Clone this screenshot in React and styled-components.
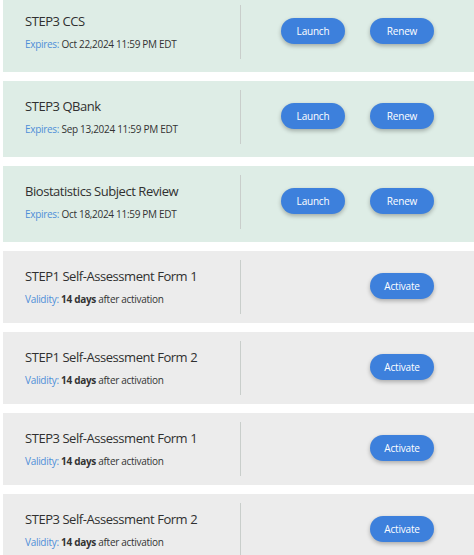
import React from 'react'
import styled, { createGlobalStyle } from 'styled-components'

const GlobalStyle = createGlobalStyle`
    body {
        margin: 0;
        background: #ffffff;
        font-family: "Open Sans", "Liberation Sans", sans-serif;
        color: #333333;
    }
`

const List = styled.div`
    display: flex;
    flex-direction: column;
    gap: 9px;
    margin-top: -4px;
    padding-left: 3px;
`

const Card = styled.div`
    box-sizing: border-box;
    display: grid;
    grid-template-columns: 237px 1px 1fr;
    align-items: start;
    padding-top: 9px;
    height: ${p => (p.$active ? '76px' : '72px')};
    background: ${p => (p.$active ? '#deede6' : '#ececec')};
`

const Info = styled.div`
    padding: 7px 0 0 22px;
    display: flex;
    flex-direction: column;
    gap: 7px;
`

const Title = styled.div`
    font-size: 13px;
    line-height: 18px;
    letter-spacing: -0.45px;
    color: #303030;
`

const Meta = styled.div`
    font-size: 10px;
    line-height: 14px;
    letter-spacing: -0.3px;
    color: #333333;

    b {
        font-weight: 700;
    }
`

const Label = styled.span`
    color: #4f8fd8;
`

const Divider = styled.div`
    width: 1px;
    height: 54px;
    background: #c9cecb;
`

const Actions = styled.div`
    display: flex;
    justify-content: flex-end;
    gap: 25px;
    padding: 13px 40px 0 0;
`

const Button = styled.button`
    width: 64px;
    height: 26px;
    padding: 0;
    border: 0;
    border-radius: 13px;
    background: #3d80dc;
    color: #ffffff;
    font-family: "Open Sans", "Liberation Sans", sans-serif;
    font-size: 10px;
    letter-spacing: -0.2px;
    cursor: pointer;
    box-shadow: 0 2px 4px rgba(0, 0, 0, 0.28);
`

const subscriptions = [
    { name: 'STEP3 CCS', expires: 'Oct 22,2024 11:59 PM EDT' },
    { name: 'STEP3 QBank', expires: 'Sep 13,2024 11:59 PM EDT' },
    { name: 'Biostatistics Subject Review', expires: 'Oct 18,2024 11:59 PM EDT' },
]

const assessments = [
    'STEP1 Self-Assessment Form 1',
    'STEP1 Self-Assessment Form 2',
    'STEP3 Self-Assessment Form 1',
    'STEP3 Self-Assessment Form 2',
]

const App = () => (
    <>
        <GlobalStyle />
        <List>
            {subscriptions.map(s => (
                <Card $active key={s.name}>
                    <Info>
                        <Title>{s.name}</Title>
                        <Meta><Label>Expires:</Label> {s.expires}</Meta>
                    </Info>
                    <Divider />
                    <Actions>
                        <Button>Launch</Button>
                        <Button>Renew</Button>
                    </Actions>
                </Card>
            ))}
            {assessments.map(name => (
                <Card key={name}>
                    <Info>
                        <Title>{name}</Title>
                        <Meta><Label>Validity:</Label> <b>14 days</b> after activation</Meta>
                    </Info>
                    <Divider />
                    <Actions>
                        <Button>Activate</Button>
                    </Actions>
                </Card>
            ))}
        </List>
    </>
)

export default App
